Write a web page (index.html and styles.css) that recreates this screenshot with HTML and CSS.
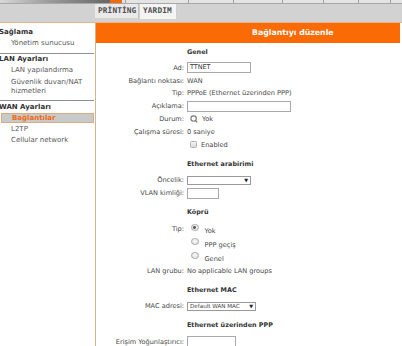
FILE: index.html
```html
<!DOCTYPE html>
<html lang="tr">
<head>
<meta charset="utf-8">
<link rel="stylesheet" href="styles.css">
</head>
<body>
<div class="topbar">
  <div class="swoosh"></div>
  <div class="orangebit"></div>
  <div class="dividers">
    <span style="left:125px"></span><span style="left:188px"></span><span style="left:233px"></span><span style="left:282px"></span><span style="left:323px"></span><span style="left:358px"></span><span style="left:390px"></span>
  </div>
</div>
<div class="tabrow">
  <div class="tab">PRİNTİNG</div>
  <div class="tab tab-active">YARDIM</div>
</div>
<div class="page">
  <nav class="sidebar">
    <div class="group g1">
      <div class="ghead">Sağlama</div>
      <div class="item">Yönetim sunucusu</div>
    </div>
    <div class="group g2">
      <div class="ghead">LAN Ayarları</div>
      <div class="item">LAN yapılandırma</div>
      <div class="item multi">Güvenlik duvarı/NAT<br>hizmetleri</div>
    </div>
    <div class="group g3">
      <div class="ghead">WAN Ayarları</div>
      <div class="item selected">Bağlantılar</div>
      <div class="item">L2TP</div>
      <div class="item">Cellular network</div>
    </div>
  </nav>
  <main class="main">
    <div class="header">Bağlantıyı düzenle</div>
    <div class="form">
      <div class="title first">Genel</div>
      <div class="row r128"><span class="lbl">Ad:</span><span class="val"><span class="input w63">TTNET</span></span></div>
      <div class="row r128"><span class="lbl">Bağlantı noktası:</span><span class="val">WAN</span></div>
      <div class="row r128"><span class="lbl">Tip:</span><span class="val">PPPoE (Ethernet üzerinden PPP)</span></div>
      <div class="row r128"><span class="lbl">Açıklama:</span><span class="val"><span class="input w103"></span></span></div>
      <div class="row r128"><span class="lbl">Durum:</span><span class="val"><svg class="spin" width="8" height="8" viewBox="0 0 8 8"><circle cx="3.6" cy="3.6" r="2.7" fill="none" stroke="#777" stroke-width="1.1"/><path d="M5.4 5.4 L7.2 7.4" stroke="#777" stroke-width="1.2"/></svg><span class="after-icon">Yok</span></span></div>
      <div class="row r128"><span class="lbl">Çalışma süresi:</span><span class="val">0 saniye</span></div>
      <div class="row r128"><span class="lbl"></span><span class="val"><span class="check"></span><span class="after-check">Enabled</span></span></div>

      <div class="title">Ethernet arabirimi</div>
      <div class="row"><span class="lbl">Öncelik:</span><span class="val"><span class="select w63"><span class="seltext"></span><span class="arrow">▼</span></span></span></div>
      <div class="row"><span class="lbl">VLAN kimliği:</span><span class="val"><span class="input w31"></span></span></div>

      <div class="title">Köprü</div>
      <div class="row r14"><span class="lbl">Tip:</span><span class="val"><span class="radio on"></span><span class="after-radio">Yok</span></span></div>
      <div class="row r14"><span class="lbl"></span><span class="val"><span class="radio"></span><span class="after-radio">PPP geçiş</span></span></div>
      <div class="row r14"><span class="lbl"></span><span class="val"><span class="radio"></span><span class="after-radio">Genel</span></span></div>
      <div class="row"><span class="lbl">LAN grubu:</span><span class="val">No applicable LAN groups</span></div>

      <div class="title">Ethernet MAC</div>
      <div class="row"><span class="lbl">MAC adresi:</span><span class="val"><span class="select w68"><span class="seltext">Default WAN MAC</span><span class="arrow">▼</span></span></span></div>

      <div class="title">Ethernet üzerinden PPP</div>
      <div class="row"><span class="lbl">Erişim Yoğunlaştırıcı:</span><span class="val"><span class="input w48"></span></span></div>
    </div>
  </main>
</div>
</body>
</html>
```

FILE: styles.css
```css
* { box-sizing: border-box; }
html, body { margin: 0; padding: 0; }
body {
  width: 402px;
  height: 346px;
  overflow: hidden;
  background: #ffffff;
  font-family: "DejaVu Sans", Verdana, sans-serif;
  color: #444;
}

/* top strip */
.topbar {
  position: relative;
  height: 4px;
  background: #e4e4e4;
  border-bottom: 1px solid #a8a8a8;
}
.swoosh {
  position: absolute;
  left: 0; top: 0;
  width: 110px; height: 3px;
  background: linear-gradient(90deg, #d8d8d8 0%, #a0a0a0 40%, #6a6a6a 95%);
}
.orangebit {
  position: absolute;
  left: 110px; top: 0;
  width: 12px; height: 3px;
  background: #f26a10;
}
.dividers span {
  position: absolute;
  top: 0;
  width: 1px;
  height: 3px;
  background: #a0a0a0;
}

/* tab row */
.tabrow {
  height: 19px;
  background: #d2d2d2;
  border-bottom: 1px solid #eab58a;
  display: flex;
  padding-left: 95px;
  align-items: flex-start;
}
.tab {
  height: 14px;
  padding: 0 2px;
  background: #e9e9e9;
  border-right: 1px solid #c0c0c0;
  font-family: "DejaVu Sans Mono", monospace;
  font-weight: bold;
  font-size: 7.8px;
  line-height: 13px;
  color: #505050;
  letter-spacing: 0.1px;
}
.tab:first-child { width: 44px; padding-left: 3px; }
.tab-active {
  width: 38px;
  height: 15px;
  background: #f4f4f4;
  border-left: 1px solid #cfcfcf;
  border-right: 1px solid #cfcfcf;
  padding-left: 3px;
}

/* page */
.page {
  display: flex;
  height: 323px;
}
.sidebar {
  width: 96px;
  flex: none;
  border-right: 1px solid #d8b48c;
  padding-top: 4px;
  font-size: 7px;
}
.group { border-bottom: 1px solid #8f8f8f; margin-right: 1px; }
.g1 { height: 27px; }
.g2 { height: 47px; }
.g3 { border-bottom: none; }
.ghead {
  height: 11px;
  line-height: 11px;
  font-weight: bold;
  color: #333;
  text-indent: -1px;
  white-space: nowrap;
}
.g3 .ghead { height: 12px; line-height: 13px; }
.item {
  height: 11px;
  line-height: 11px;
  padding-left: 11px;
  color: #585858;
  white-space: nowrap;
}
.item.multi {
  height: auto;
  line-height: 9px;
  padding-top: 2px;
}
.item.selected {
  height: 10px;
  line-height: 9px;
  margin-left: 1px;
  padding-left: 10px;
  background: #c9c9c9;
  border: 1px solid #d9ab80;
  color: #f26a10;
  font-weight: bold;
  margin-bottom: 1px;
}

/* main */
.main {
  flex: 1;
  min-width: 0;
}
.header {
  height: 20px;
  margin-right: 2px;
  background: #fa6a05;
  color: #ffffff;
  font-weight: bold;
  font-size: 7.8px;
  line-height: 20px;
  padding-left: 156px;
  white-space: nowrap;
}
.form {
  padding-top: 2.5px;
  font-size: 6.6px;
  color: #484848;
}
.row {
  display: flex;
  align-items: center;
  height: 13px;
}
.r128 { height: 12.8px; }
.r14 { height: 14px; }
.lbl {
  width: 88px;
  flex: none;
  text-align: right;
  white-space: nowrap;
}
.val {
  margin-left: 3px;
  display: flex;
  align-items: center;
  white-space: nowrap;
}
.title {
  height: 13px;
  line-height: 13px;
  margin: 6.5px 0 3px 91px;
  font-weight: bold;
  color: #333;
  font-size: 6.4px;
}
.title.first { margin-top: 0; }

.input {
  display: block;
  height: 11px;
  border: 1px solid #a9a9a9;
  background: #fff;
  font-size: 6.4px;
  line-height: 9px;
  padding-left: 2px;
  color: #333;
}
.w63 { width: 64px; }
.w103 { width: 104px; }
.w31 { width: 32px; }
.w48 { width: 49px; }
.w68 { width: 69px; }

.select {
  display: flex;
  align-items: center;
  height: 9px;
  border: 1px solid #9a9a9a;
  background: #fff;
  font-size: 5.6px;
  color: #444;
  padding: 0 2px 0 2px;
}
.seltext { flex: 1; }
.arrow { font-size: 5px; color: #222; }

.spin { display: block; margin-left: 3px; }
.after-icon { margin-left: 4px; }

.check {
  display: block;
  width: 7px;
  height: 7px;
  margin-left: 3px;
  border: 1px solid #b0b0b0;
  border-radius: 1.5px;
  background: linear-gradient(#f4f4f4, #dcdcdc);
}
.after-check { margin-left: 4px; }

.radio {
  display: block;
  width: 7.5px;
  height: 7.5px;
  margin-left: 4px;
  border-radius: 50%;
  border: 1px solid #a8a8a8;
  background: radial-gradient(circle at 50% 40%, #fafafa, #d8d8d8);
  position: relative;
  top: -1.5px;
}
.radio.on::after {
  content: "";
  position: absolute;
  left: 1.3px; top: 1.3px;
  width: 2.9px; height: 2.9px;
  border-radius: 50%;
  background: #555;
}
.after-radio { margin-left: 6px; position: relative; top: 1.5px; }
```
